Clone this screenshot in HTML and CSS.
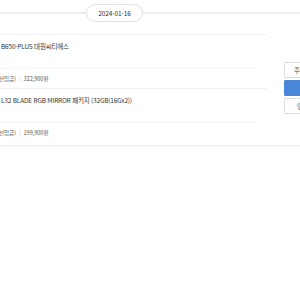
FILE: index.html
```html
<!DOCTYPE html>
<html lang="ko">
<head>
  <meta charset="UTF-8">
  <title>주문내역</title>
  <link rel="stylesheet" href="styles.css">
</head>
<body>
  <div class="page">
    <div class="date-row">
      <span class="date-line date-line-left"></span>
      <span class="date-pill">2024-01-16</span>
      <span class="date-line"></span>
    </div>
    <div class="order">
      <ul class="items">
        <li class="item">
          <p class="item-name">B650-PLUS 대원씨티에스</p>
          <p class="item-meta"><span>선입금)</span><span class="sep">|</span><span>322,900원</span></p>
        </li>
        <li class="item">
          <p class="item-name">L32 BLADE RGB MIRROR 패키지 (32GB(16Gx2))</p>
          <p class="item-meta"><span>선입금)</span><span class="sep">|</span><span>199,900원</span></p>
        </li>
      </ul>
      <div class="actions">
        <button class="btn">주문상세</button>
        <button class="btn btn-primary">결제</button>
        <button class="btn">영수증</button>
      </div>
    </div>
  </div>
</body>
</html>
```

FILE: styles.css
```css
html, body {
  margin: 0;
  padding: 0;
  background: #fff;
  overflow: hidden;
}
body {
  font-family: "Noto Sans CJK KR", "Noto Sans", sans-serif;
  color: #333;
}
.page {
  width: 300px;
  overflow: hidden;
}
.date-row {
  display: flex;
  align-items: center;
  padding-top: 4px;
  height: 18px;
}
.date-line {
  flex: 1;
  height: 2px;
  background: #eee;
}
.date-line-left {
  flex: 0 0 86px;
}
.date-pill {
  width: 57px;
  height: 18px;
  box-sizing: border-box;
  border: 1px solid #e2e2e2;
  border-radius: 9px;
  font-size: 6.5px;
  letter-spacing: -0.1px;
  display: flex;
  align-items: center;
  justify-content: center;
}
.order {
  display: flex;
  margin-top: 12px;
  border-bottom: 2px solid #f2f2f2;
}
.items {
  list-style: none;
  margin: 0;
  padding: 0;
  width: 267px;
  flex-shrink: 0;
  border-top: 1px solid #f0f0f0;
}
.item {
  border-bottom: 1px solid #f0f0f0;
}
.item:last-child {
  border-bottom: 0;
}
.item-name {
  margin: 0;
  width: 256px;
  padding: 6px 0 17px 1px;
  box-sizing: border-box;
  line-height: 10px;
  font-size: 6.5px;
  letter-spacing: -0.2px;
  border-bottom: 1px solid #f5f5f5;
}
.item-meta {
  display: flex;
  gap: 3px;
  margin: 0 0 0 -1px;
  padding: 5px 0 4px;
  line-height: 10px;
  font-size: 5.5px;
  color: #555;
}
.item:last-child .item-meta {
  padding-bottom: 7px;
}
.sep {
  color: #ccc;
}
.actions {
  display: flex;
  flex-direction: column;
  gap: 2px;
  margin: 28px 0 0 17px;
}
.btn {
  width: 44px;
  height: 16px;
  flex-shrink: 0;
  padding: 0;
  border: 1px solid #ddd;
  border-radius: 1px;
  background: #fff;
  font-family: inherit;
  font-size: 6.5px;
  color: #444;
}
.btn-primary {
  background: #4a86d9;
  border-color: #4a86d9;
  color: #fff;
}
```
